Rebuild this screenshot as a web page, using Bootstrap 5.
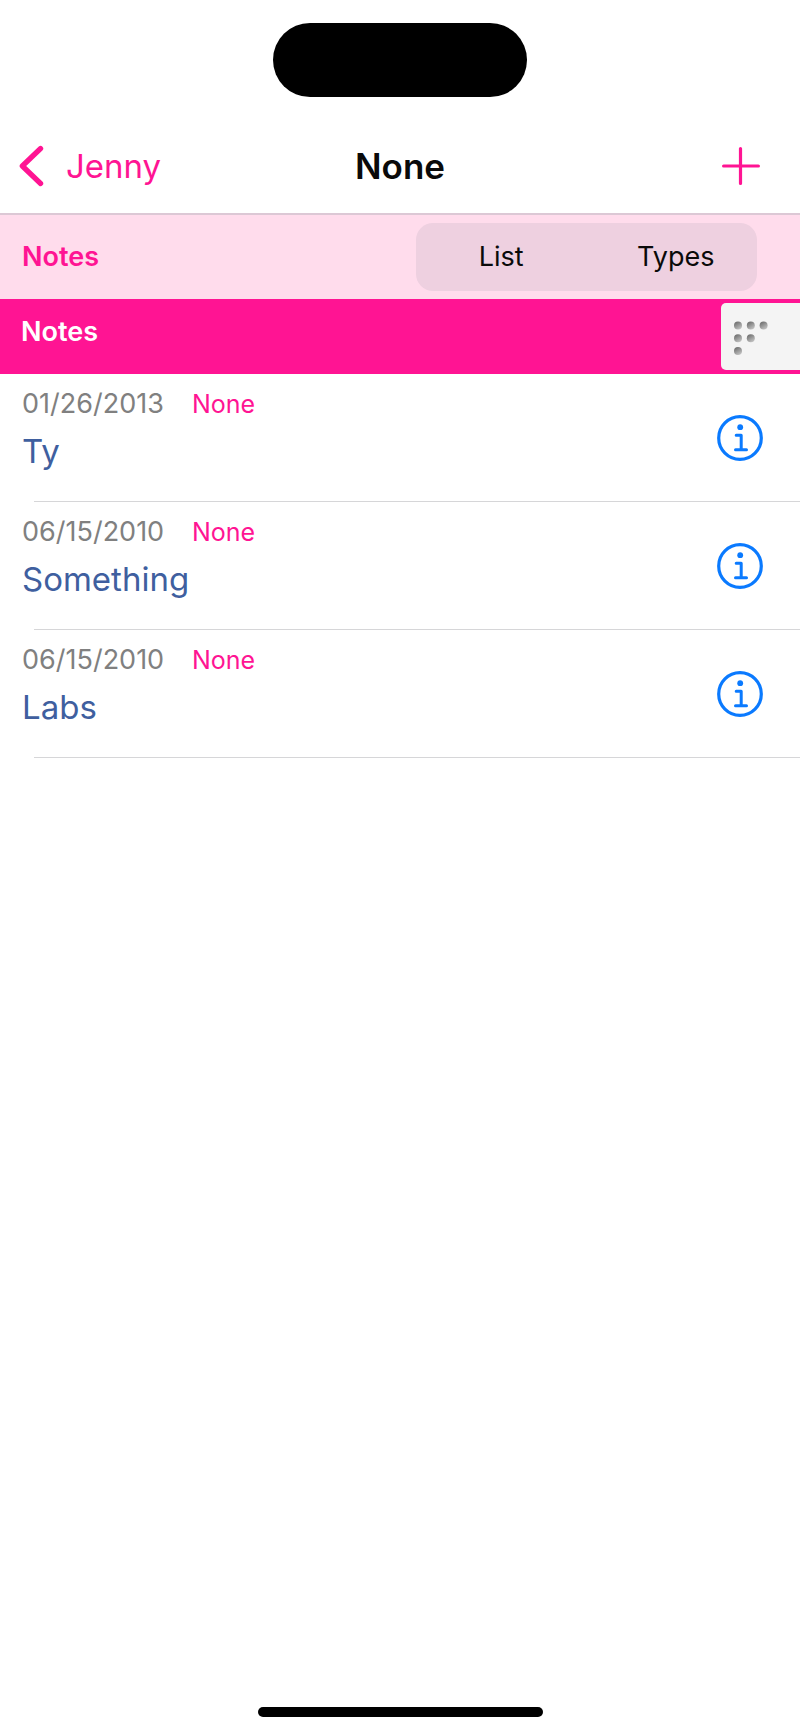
<!DOCTYPE html>
<html lang="en">
<head>
<meta charset="utf-8">
<meta name="viewport" content="width=device-width, initial-scale=1">
<title>None</title>
<link href="https://cdn.jsdelivr.net/npm/bootstrap@5.3.0/dist/css/bootstrap.min.css" rel="stylesheet">
<style>
  :root { --pink: #ff1493; --blush: #ffdcec; --ink-blue: #3f5f9f; --info: #0a7aff; }
  body { font-family: Inter, "Liberation Sans", sans-serif; background: #fff; color: #0a0a0a; }
  .island { width: 254px; height: 74px; border-radius: 37px; background: #000; margin-top: 23px; }
  .topbar { display: grid; grid-template-columns: 1fr auto 1fr; height: 96px; margin-top: 22px; padding: 0 18px; border-bottom: 2px solid #dcc8d5; }
  .back { color: var(--pink); font-size: 33px; line-height: 44px; gap: 20px; }
  .page-title { font-size: 35px; line-height: 44px; font-weight: 600; }
  .add { color: var(--pink); margin-right: 22px; }
  .filter { background: var(--blush); height: 84px; padding: 0 43px 0 22px; }
  .heading { font-size: 27px; line-height: 34px; font-weight: 600; }
  .filter .heading { color: var(--pink); }
  .segments { width: 341px; height: 68px; border-radius: 17px; background: #eed0e0; }
  .segments button { font-size: 27px; line-height: 34px; color: #0a0a0a; }
  .section-bar { background: var(--pink); height: 75px; padding-left: 21px; }
  .section-bar .heading { color: #fff; padding-top: 16px; }
  .grip { width: 79px; height: 67px; margin-top: 4px; background: #f4f4f4; border-radius: 5px 0 0 5px; }
  .note { height: 128px; padding: 13px 37px 0 22px; }
  .note::after { content: ""; position: absolute; left: 34px; right: 0; bottom: 0; height: 1px; background: #d6d6d8; }
  .stamp { font-size: 27px; line-height: 34px; color: #808080; width: 170px; }
  .kind { font-size: 25px; line-height: 34px; color: var(--pink); }
  .note-name { font-size: 33px; line-height: 42px; color: var(--ink-blue); margin-top: 9px; }
  .info { color: var(--info); margin-top: 28px; }
  .home-bar { width: 285px; height: 10px; border-radius: 5px; background: #000; margin-bottom: 17px; }
</style>
</head>
<body>
<svg width="0" height="0" class="position-absolute" aria-hidden="true">
  <defs>
    <linearGradient id="dot" x1="0.2" y1="0" x2="0.8" y2="1"><stop offset="0" stop-color="#6a6a6a"/><stop offset="1" stop-color="#c8c8c8"/></linearGradient>
    <symbol id="info" viewBox="0 0 46 46">
      <circle cx="23" cy="23" r="21.3" fill="none" stroke="currentColor" stroke-width="3.2"/>
      <circle cx="23.2" cy="12.2" r="2.9" fill="currentColor"/>
      <path d="M19.2 20.3h5v14M18.5 34.7h11" fill="none" stroke="currentColor" stroke-width="3" stroke-linecap="round" stroke-linejoin="round"/>
    </symbol>
  </defs>
</svg>
<div class="d-flex flex-column min-vh-100">
  <div class="island mx-auto"></div>
  <header class="topbar align-items-center">
    <a href="#" class="back d-flex align-items-center text-decoration-none">
      <svg width="28" height="42" viewBox="0 0 28 42" fill="none" stroke="currentColor" stroke-width="5.2" stroke-linecap="round" stroke-linejoin="round" aria-hidden="true"><path d="M22.6 3.5L4.3 21l18.3 17.5"/></svg>
      <span>Jenny</span>
    </a>
    <h1 class="page-title m-0">None</h1>
    <button type="button" class="add btn border-0 p-0 ms-auto d-flex" aria-label="Add">
      <svg width="38" height="38" viewBox="0 0 38 38" fill="none" stroke="currentColor" stroke-width="3.2" stroke-linecap="round"><path d="M18.5 1.6v34.8M1.6 19h34.8"/></svg>
    </button>
  </header>
  <div class="filter d-flex align-items-center justify-content-between">
    <h2 class="heading m-0">Notes</h2>
    <div class="segments d-flex" role="group" aria-label="View">
      <button type="button" class="btn border-0 p-0 flex-fill w-50">List</button>
      <button type="button" class="btn border-0 py-0 pe-0 ps-2 flex-fill w-50">Types</button>
    </div>
  </div>
  <div class="section-bar d-flex justify-content-between align-items-start">
    <h2 class="heading m-0">Notes</h2>
    <button type="button" class="grip btn border-0 p-0 d-flex" aria-label="Index">
      <svg width="79" height="67" viewBox="0 0 79 67" fill="url(#dot)"><circle cx="17" cy="22.5" r="4"/><circle cx="29.8" cy="22.5" r="4"/><circle cx="42.6" cy="22.5" r="4"/><circle cx="17" cy="35.2" r="4"/><circle cx="29.8" cy="35.2" r="4"/><circle cx="17" cy="48" r="4"/></svg>
    </button>
  </div>
  <ul class="list-unstyled m-0 flex-grow-1">
    <li class="note position-relative d-flex justify-content-between align-items-start">
      <div><div class="d-flex"><span class="stamp">01/26/2013</span><span class="kind">None</span></div><div class="note-name">Ty</div></div>
      <button type="button" class="info btn border-0 p-0 d-flex" aria-label="Details of Ty"><svg width="46" height="46"><use href="#info"/></svg></button>
    </li>
    <li class="note position-relative d-flex justify-content-between align-items-start">
      <div><div class="d-flex"><span class="stamp">06/15/2010</span><span class="kind">None</span></div><div class="note-name">Something</div></div>
      <button type="button" class="info btn border-0 p-0 d-flex" aria-label="Details of Something"><svg width="46" height="46"><use href="#info"/></svg></button>
    </li>
    <li class="note position-relative d-flex justify-content-between align-items-start">
      <div><div class="d-flex"><span class="stamp">06/15/2010</span><span class="kind">None</span></div><div class="note-name">Labs</div></div>
      <button type="button" class="info btn border-0 p-0 d-flex" aria-label="Details of Labs"><svg width="46" height="46"><use href="#info"/></svg></button>
    </li>
  </ul>
  <div class="home-bar mx-auto"></div>
</div>
<script src="https://cdn.jsdelivr.net/npm/bootstrap@5.3.0/dist/js/bootstrap.bundle.min.js"></script>
</body>
</html>
